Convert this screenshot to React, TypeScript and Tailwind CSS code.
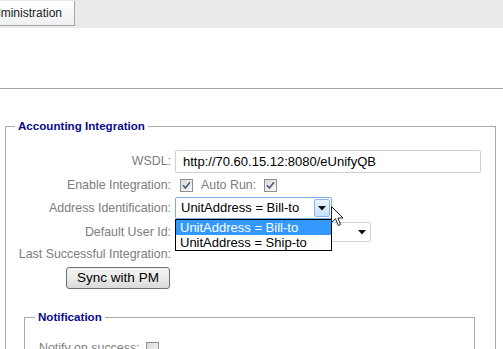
import React from 'react';

const Check = () => (
  <span className="inline-flex h-[13px] w-[13px] shrink-0 items-center justify-center border border-[#8f8f8f] bg-gradient-to-br from-[#d9d9d9] to-[#fafafa]">
    <svg width="9" height="9" viewBox="0 0 9 9">
      <path d="M1 4.2 L3.4 7 L8 1.2" stroke="#4a5d84" strokeWidth="1.7" fill="none" />
    </svg>
  </span>
);

const Arrow = () => (
  <svg width="8" height="5" viewBox="0 0 8 5">
    <path d="M0 0 H8 L4 4.5 Z" fill="#111" />
  </svg>
);

const Row: React.FC<{ label: string; className?: string; children?: React.ReactNode }> = ({ label, className = '', children }) => (
  <div className={`flex items-center gap-[4px] ${className}`}>
    <div className="w-[165px] shrink-0 whitespace-nowrap text-right text-[12.4px] leading-none text-[#7d7d7d]">{label}</div>
    <div className="relative flex items-center">{children}</div>
  </div>
);

export default function App() {
  return (
    <div className="relative h-[349px] w-[503px] overflow-hidden bg-white font-['Liberation_Sans',Arial,sans-serif]">
      {/* tab strip */}
      <div className="h-[28px] overflow-hidden bg-[#eaeaea]">
        <div className="-ml-[23px] inline-flex h-[25px] items-center border border-t-0 border-[#a3a7ad] bg-gradient-to-b from-white to-[#eff0f2] pl-[8px] pr-[12px] text-[12px] text-[#222]">
          Administration
        </div>
      </div>
      <div className="h-[61px] border-b border-[#a4a4a4]" />

      <fieldset className="ml-[5px] mt-[30px] h-[400px] w-[491px] border border-[#a8a8a8] pt-[17px]">
        <legend className="ml-[9px] px-[3px] text-[11.6px] font-bold leading-[14px] text-[#0a0a8a]">Accounting Integration</legend>

        <Row label="WSDL:" className="h-[23px]">
          <div className="flex h-[23px] w-[306px] items-center rounded-[2px] border border-[#cfcfcf] pl-[7px] text-[13px] text-black">
            http://70.60.15.12:8080/eUnifyQB
          </div>
        </Row>

        <Row label="Enable Integration:" className="mt-[4px] h-[16px]">
          <div className="ml-[5px] flex items-center gap-[8px]">
            <Check />
            <span className="text-[12.4px] text-[#7d7d7d]">Auto Run:</span>
            <Check />
          </div>
        </Row>

        <Row label="Address Identification:" className="mt-[4px] h-[22px]">
          <div className="flex h-[22px] w-[157px] items-stretch rounded-[2px] border border-[#7aaee0] bg-white">
            <div className="flex flex-1 items-center pl-[5px] text-[13px] text-black">UnitAddress = Bill-to</div>
            <div className="my-[1px] mr-[1px] flex w-[16px] items-center justify-center rounded-[2px] border border-[#8ab8e6] bg-gradient-to-b from-[#eaf5fd] to-[#c4e0f8]">
              <Arrow />
            </div>
          </div>
          <div className="absolute left-0 top-[22px] z-10 w-[157px] border border-black bg-white text-[13px] leading-[15px]">
            <div className="bg-[#3399ff] pl-[4px] text-white">UnitAddress = Bill-to</div>
            <div className="pl-[4px] text-black">UnitAddress = Ship-to</div>
          </div>
        </Row>

        <Row label="Default User Id:" className="mt-[3px] h-[20px]">
          <div className="flex h-[20px] w-[196px] items-center justify-end rounded-[2px] border border-[#d2d2d2] bg-white pr-[4px]">
            <Arrow />
          </div>
        </Row>

        <Row label="Last Successful Integration:" className="mt-[4px] h-[16px]" />

        <div className="mt-[3px] pl-[60px]">
          <button
            type="button"
            className="h-[22px] w-[104px] rounded-[3px] border border-[#707070] bg-gradient-to-b from-[#f3f3f3] via-[#ebebeb] to-[#d9d9d9] text-[13.5px] leading-none text-black"
          >
            Sync with PM
          </button>
        </div>

        <fieldset className="ml-[18px] mt-[21px] h-[200px] w-[451px] border border-[#a8a8a8] pt-[18px]">
          <legend className="ml-[10px] px-[3px] text-[11.6px] font-bold leading-[14px] text-[#0a0a8a]">Notification</legend>
          <div className="flex items-center gap-[6px] pl-[14px]">
            <span className="text-[12.4px] leading-none text-[#7d7d7d]">Notify on success:</span>
            <span className="h-[13px] w-[13px] border border-[#8f8f8f] bg-gradient-to-br from-[#d9d9d9] to-[#fafafa]" />
          </div>
        </fieldset>
      </fieldset>

      {/* mouse pointer */}
      <svg className="absolute left-[331px] top-[206px] z-20" width="14" height="22" viewBox="0 0 14 22">
        <path d="M0.5 0.5 V16.5 L4.5 12.8 L7.3 19.5 L9.6 18.5 L6.9 12 H12 Z" fill="#fff" stroke="#222" strokeWidth="1" strokeLinejoin="round" />
      </svg>
    </div>
  );
}
